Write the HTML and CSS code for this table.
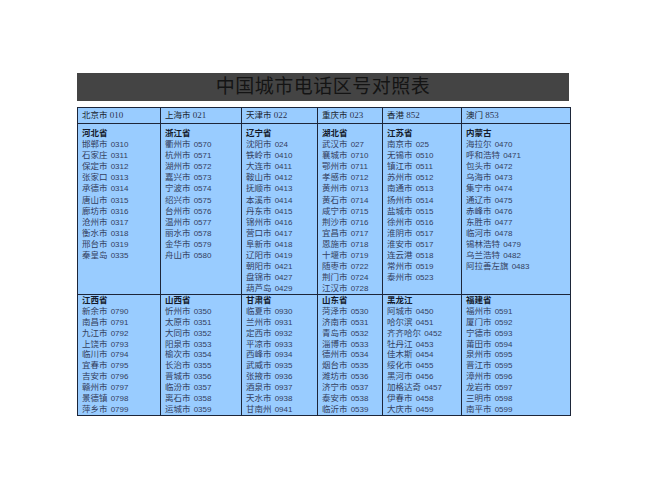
FILE: index.html
```html
<!DOCTYPE html>
<html lang="zh-CN">
<head>
<meta charset="utf-8">
<title>中国城市电话区号对照表</title>
<link rel="stylesheet" href="styles.css">
</head>
<body>
<div class="page">
  <div class="title">中国城市电话区号对照表</div>
  <div class="sheet">
    <div class="cell head">北京市 <span class="hn">010</span></div>
    <div class="cell head">上海市 <span class="hn">021</span></div>
    <div class="cell head">天津市 <span class="hn">022</span></div>
    <div class="cell head">重庆市 <span class="hn">023</span></div>
    <div class="cell head">香港 <span class="hn">852</span></div>
    <div class="cell head">澳门 <span class="hn">853</span></div>

    <div class="cell sec s1">
      <div class="prov">河北省</div>
      <div class="e">邯郸市 <span class="n">0310</span></div>
      <div class="e">石家庄 <span class="n">0311</span></div>
      <div class="e">保定市 <span class="n">0312</span></div>
      <div class="e">张家口 <span class="n">0313</span></div>
      <div class="e">承德市 <span class="n">0314</span></div>
      <div class="e">唐山市 <span class="n">0315</span></div>
      <div class="e">廊坊市 <span class="n">0316</span></div>
      <div class="e">沧州市 <span class="n">0317</span></div>
      <div class="e">衡水市 <span class="n">0318</span></div>
      <div class="e">邢台市 <span class="n">0319</span></div>
      <div class="e">秦皇岛 <span class="n">0335</span></div>
    </div>
    <div class="cell sec s1">
      <div class="prov">浙江省</div>
      <div class="e">衢州市 <span class="n">0570</span></div>
      <div class="e">杭州市 <span class="n">0571</span></div>
      <div class="e">湖州市 <span class="n">0572</span></div>
      <div class="e">嘉兴市 <span class="n">0573</span></div>
      <div class="e">宁波市 <span class="n">0574</span></div>
      <div class="e">绍兴市 <span class="n">0575</span></div>
      <div class="e">台州市 <span class="n">0576</span></div>
      <div class="e">温州市 <span class="n">0577</span></div>
      <div class="e">丽水市 <span class="n">0578</span></div>
      <div class="e">金华市 <span class="n">0579</span></div>
      <div class="e">舟山市 <span class="n">0580</span></div>
    </div>
    <div class="cell sec s1">
      <div class="prov">辽宁省</div>
      <div class="e">沈阳市 <span class="n">024</span></div>
      <div class="e">铁岭市 <span class="n">0410</span></div>
      <div class="e">大连市 <span class="n">0411</span></div>
      <div class="e">鞍山市 <span class="n">0412</span></div>
      <div class="e">抚顺市 <span class="n">0413</span></div>
      <div class="e">本溪市 <span class="n">0414</span></div>
      <div class="e">丹东市 <span class="n">0415</span></div>
      <div class="e">锦州市 <span class="n">0416</span></div>
      <div class="e">营口市 <span class="n">0417</span></div>
      <div class="e">阜新市 <span class="n">0418</span></div>
      <div class="e">辽阳市 <span class="n">0419</span></div>
      <div class="e">朝阳市 <span class="n">0421</span></div>
      <div class="e">盘锦市 <span class="n">0427</span></div>
      <div class="e">葫芦岛 <span class="n">0429</span></div>
    </div>
    <div class="cell sec s1">
      <div class="prov">湖北省</div>
      <div class="e">武汉市 <span class="n">027</span></div>
      <div class="e">襄城市 <span class="n">0710</span></div>
      <div class="e">鄂州市 <span class="n">0711</span></div>
      <div class="e">孝感市 <span class="n">0712</span></div>
      <div class="e">黄州市 <span class="n">0713</span></div>
      <div class="e">黄石市 <span class="n">0714</span></div>
      <div class="e">咸宁市 <span class="n">0715</span></div>
      <div class="e">荆沙市 <span class="n">0716</span></div>
      <div class="e">宜昌市 <span class="n">0717</span></div>
      <div class="e">恩施市 <span class="n">0718</span></div>
      <div class="e">十堰市 <span class="n">0719</span></div>
      <div class="e">随枣市 <span class="n">0722</span></div>
      <div class="e">荆门市 <span class="n">0724</span></div>
      <div class="e">江汉市 <span class="n">0728</span></div>
    </div>
    <div class="cell sec s1">
      <div class="prov">江苏省</div>
      <div class="e">南京市 <span class="n">025</span></div>
      <div class="e">无锡市 <span class="n">0510</span></div>
      <div class="e">镇江市 <span class="n">0511</span></div>
      <div class="e">苏州市 <span class="n">0512</span></div>
      <div class="e">南通市 <span class="n">0513</span></div>
      <div class="e">扬州市 <span class="n">0514</span></div>
      <div class="e">盐城市 <span class="n">0515</span></div>
      <div class="e">徐州市 <span class="n">0516</span></div>
      <div class="e">淮阴市 <span class="n">0517</span></div>
      <div class="e">淮安市 <span class="n">0517</span></div>
      <div class="e">连云港 <span class="n">0518</span></div>
      <div class="e">常州市 <span class="n">0519</span></div>
      <div class="e">泰州市 <span class="n">0523</span></div>
    </div>
    <div class="cell sec s1">
      <div class="prov">内蒙古</div>
      <div class="e">海拉尔 <span class="n">0470</span></div>
      <div class="e">呼和浩特 <span class="n">0471</span></div>
      <div class="e">包头市 <span class="n">0472</span></div>
      <div class="e">乌海市 <span class="n">0473</span></div>
      <div class="e">集宁市 <span class="n">0474</span></div>
      <div class="e">通辽市 <span class="n">0475</span></div>
      <div class="e">赤峰市 <span class="n">0476</span></div>
      <div class="e">东胜市 <span class="n">0477</span></div>
      <div class="e">临河市 <span class="n">0478</span></div>
      <div class="e">锡林浩特 <span class="n">0479</span></div>
      <div class="e">乌兰浩特 <span class="n">0482</span></div>
      <div class="e">阿拉善左旗 <span class="n">0483</span></div>
    </div>

    <div class="cell sec s2">
      <div class="prov">江西省</div>
      <div class="e">新余市 <span class="n">0790</span></div>
      <div class="e">南昌市 <span class="n">0791</span></div>
      <div class="e">九江市 <span class="n">0792</span></div>
      <div class="e">上饶市 <span class="n">0793</span></div>
      <div class="e">临川市 <span class="n">0794</span></div>
      <div class="e">宜春市 <span class="n">0795</span></div>
      <div class="e">吉安市 <span class="n">0796</span></div>
      <div class="e">赣州市 <span class="n">0797</span></div>
      <div class="e">景德镇 <span class="n">0798</span></div>
      <div class="e">萍乡市 <span class="n">0799</span></div>
    </div>
    <div class="cell sec s2">
      <div class="prov">山西省</div>
      <div class="e">忻州市 <span class="n">0350</span></div>
      <div class="e">太原市 <span class="n">0351</span></div>
      <div class="e">大同市 <span class="n">0352</span></div>
      <div class="e">阳泉市 <span class="n">0353</span></div>
      <div class="e">榆次市 <span class="n">0354</span></div>
      <div class="e">长治市 <span class="n">0355</span></div>
      <div class="e">晋城市 <span class="n">0356</span></div>
      <div class="e">临汾市 <span class="n">0357</span></div>
      <div class="e">离石市 <span class="n">0358</span></div>
      <div class="e">运城市 <span class="n">0359</span></div>
    </div>
    <div class="cell sec s2">
      <div class="prov">甘肃省</div>
      <div class="e">临夏市 <span class="n">0930</span></div>
      <div class="e">兰州市 <span class="n">0931</span></div>
      <div class="e">定西市 <span class="n">0932</span></div>
      <div class="e">平凉市 <span class="n">0933</span></div>
      <div class="e">西峰市 <span class="n">0934</span></div>
      <div class="e">武威市 <span class="n">0935</span></div>
      <div class="e">张掖市 <span class="n">0936</span></div>
      <div class="e">酒泉市 <span class="n">0937</span></div>
      <div class="e">天水市 <span class="n">0938</span></div>
      <div class="e">甘南州 <span class="n">0941</span></div>
    </div>
    <div class="cell sec s2">
      <div class="prov">山东省</div>
      <div class="e">菏泽市 <span class="n">0530</span></div>
      <div class="e">济南市 <span class="n">0531</span></div>
      <div class="e">青岛市 <span class="n">0532</span></div>
      <div class="e">淄博市 <span class="n">0533</span></div>
      <div class="e">德州市 <span class="n">0534</span></div>
      <div class="e">烟台市 <span class="n">0535</span></div>
      <div class="e">潍坊市 <span class="n">0536</span></div>
      <div class="e">济宁市 <span class="n">0537</span></div>
      <div class="e">泰安市 <span class="n">0538</span></div>
      <div class="e">临沂市 <span class="n">0539</span></div>
    </div>
    <div class="cell sec s2">
      <div class="prov">黑龙江</div>
      <div class="e">阿城市 <span class="n">0450</span></div>
      <div class="e">哈尔滨 <span class="n">0451</span></div>
      <div class="e">齐齐哈尔 <span class="n">0452</span></div>
      <div class="e">牡丹江 <span class="n">0453</span></div>
      <div class="e">佳木斯 <span class="n">0454</span></div>
      <div class="e">绥化市 <span class="n">0455</span></div>
      <div class="e">黑河市 <span class="n">0456</span></div>
      <div class="e">加格达奇 <span class="n">0457</span></div>
      <div class="e">伊春市 <span class="n">0458</span></div>
      <div class="e">大庆市 <span class="n">0459</span></div>
    </div>
    <div class="cell sec s2">
      <div class="prov">福建省</div>
      <div class="e">福州市 <span class="n">0591</span></div>
      <div class="e">厦门市 <span class="n">0592</span></div>
      <div class="e">宁德市 <span class="n">0593</span></div>
      <div class="e">莆田市 <span class="n">0594</span></div>
      <div class="e">泉州市 <span class="n">0595</span></div>
      <div class="e">晋江市 <span class="n">0595</span></div>
      <div class="e">漳州市 <span class="n">0596</span></div>
      <div class="e">龙岩市 <span class="n">0597</span></div>
      <div class="e">三明市 <span class="n">0598</span></div>
      <div class="e">南平市 <span class="n">0599</span></div>
    </div>
  </div>
</div>
</body>
</html>
```

FILE: styles.css
```css
html, body {
  margin: 0;
  padding: 0;
  background: #ffffff;
}

.page {
  padding: 73px 0 0 77px;
  font-family: "Liberation Serif", "Noto Sans CJK SC", serif;
}

.title {
  width: 492px;
  height: 28px;
  background: #444444;
  color: #141414;
  font-family: "Liberation Serif", "Noto Sans CJK SC", serif;
  font-size: 19px;
  line-height: 28px;
  text-align: center;
  letter-spacing: 0.5px;
  margin-bottom: 6px;
}

.sheet {
  display: grid;
  grid-template-columns: 82px 80px 75px 64px 78px 108px;
  grid-template-rows: 15px 170px 120px;
  gap: 1px;
  padding: 1px;
  background: #1d2639;
  width: max-content;
}

.cell {
  background: #99ccff;
  padding: 0 4px;
  overflow: hidden;
  white-space: nowrap;
}

.head {
  font-size: 8.5px;
  line-height: 15px;
  color: #1a1f2e;
}

.hn {
  font-family: "Liberation Serif", serif;
  font-size: 9px;
  color: #2a3350;
}

.sec {
  font-size: 8.5px;
  line-height: 10.5px;
}

.s1 {
  padding-top: 4px;
}

.s1 .prov,
.s1 .e {
  height: 11.1px;
}

.s2 {
  padding-top: 0;
}

.s2 .prov,
.s2 .e {
  height: 10.9px;
}

.prov {
  font-weight: bold;
  color: #141a2a;
}

.e {
  color: #34405e;
}

.n {
  font-family: "Liberation Sans", sans-serif;
  font-size: 8px;
  line-height: 8px;
  color: #34405e;
  margin-left: 1px;
}
```
